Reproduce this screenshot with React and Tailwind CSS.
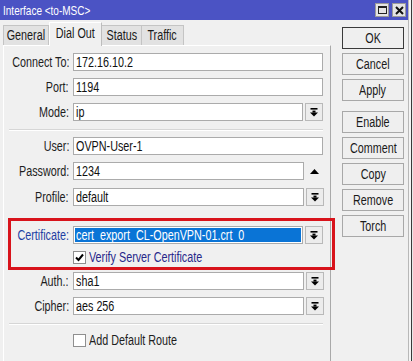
import React from "react";

const FONT = { fontFamily: '"Liberation Sans", Arial, sans-serif' };

function T({ children, o = "origin-left" }) {
  return <span className={`inline-block whitespace-nowrap scale-x-[0.77] ${o}`}>{children}</span>;
}

function DropIcon() {
  return (
    <svg width="8" height="9" viewBox="0 0 8 9">
      <rect x="0.5" y="0" width="7" height="1.6" fill="#000" />
      <rect x="2.5" y="2.6" width="3" height="2" fill="#000" />
      <polygon points="0,4.4 8,4.4 4,8.6" fill="#000" />
    </svg>
  );
}

function DropBtn() {
  return (
    <div className="w-[18px] h-[18px] ml-[2px] border border-[#b9b9b9] bg-[#ececec] flex items-center justify-center">
      <DropIcon />
    </div>
  );
}

function Label({ children, color = "text-[#1e1e1e]" }) {
  return (
    <div className={`w-[65px] pr-[1px] flex justify-end ${color} leading-[18px]`}>
      <T o="origin-right">{children}</T>
    </div>
  );
}

function Field({ label, value, w = "w-[250px]", extra, labelColor, selected }) {
  return (
    <div className="flex items-center h-[18px]">
      <Label color={labelColor}>{label}</Label>
      <div className={`${w} h-[18px] ml-[3px] border border-[#ababab] bg-white flex items-center overflow-hidden ${selected ? "p-[1px]" : ""}`}>
        {selected ? (
          <div className="w-full h-full bg-[#0a74d6] text-white flex items-center pl-[1px] leading-none">
            <T>{value}</T>
          </div>
        ) : (
          <span className="pl-[2px] text-[#111] leading-none">
            <T>{value}</T>
          </span>
        )}
      </div>
      {extra}
    </div>
  );
}

function Check({ checked, label, color }) {
  return (
    <div className="flex items-center h-[18px] pl-[68px]">
      <div className="w-[13px] h-[13px] border border-[#8f8f8f] bg-white flex items-center justify-center">
        {checked && (
          <svg width="9" height="9" viewBox="0 0 9 9">
            <polyline points="1,4.5 3.5,7 8,1.5" fill="none" stroke="#000" strokeWidth="2" />
          </svg>
        )}
      </div>
      <span className={`ml-[3px] ${color} leading-none`}>
        <T>{label}</T>
      </span>
    </div>
  );
}

function Sep() {
  return <div className="ml-[4px] w-[314px] h-[2px] border-t border-[#d6d6d6] border-b border-b-white" />;
}

function Btn({ children, ok }) {
  return (
    <div
      className={`w-[62px] h-[22px] border ${ok ? "border-[#3a3a3a]" : "border-[#a8a8a8]"} bg-[#efefef] flex items-center justify-center text-[#1a1a1a] leading-none`}
    >
      <T o="origin-center">{children}</T>
    </div>
  );
}

function Tab({ children, w, active, first }) {
  if (active) {
    return (
      <div className={`${w} h-[24px] -mb-[1px] bg-[#f0f0f0] border border-white border-r-[#bdbdbd] border-b-0 flex items-center justify-center text-[#1a1a1a] pb-[3px]`}>
        <T o="origin-center">{children}</T>
      </div>
    );
  }
  return (
    <div className={`${w} h-[20px] bg-[#e2e2e2] border border-[#c4c4c4] border-b-0 ${first ? "" : "border-l-0"} flex items-center justify-center text-[#1a1a1a]`}>
      <T o="origin-center">{children}</T>
    </div>
  );
}

export default function App() {
  return (
    <div className="w-[413px] h-[361px] bg-[#f0f0f0] flex overflow-hidden text-[14px]" style={FONT}>
      <div className="w-[409px] h-full flex flex-col border-r border-[#b8b8b8]">
        {/* Title bar */}
        <div className="h-[20px] bg-[#4b53c4] flex items-center justify-between pl-[3px] pr-[2px]">
          <span className="text-white text-[13px] leading-none">
            <T>Interface &lt;to-MSC&gt;</T>
          </span>
          <div className="flex gap-[3px]">
            <div className="w-[14px] h-[14px] bg-[#e4e4e4] border border-[#9a9a9a] flex items-center justify-center">
              <div className="w-[9px] h-[8px] border border-[#222] border-t-2" />
            </div>
            <div className="w-[14px] h-[14px] bg-[#e4e4e4] border border-[#9a9a9a] flex items-center justify-center">
              <svg width="9" height="9" viewBox="0 0 9 9">
                <path d="M1 1 L8 8 M8 1 L1 8" stroke="#111" strokeWidth="2" />
              </svg>
            </div>
          </div>
        </div>

        <div className="flex flex-1">
          {/* Left: tabs + panel */}
          <div className="w-[331px] flex flex-col pl-[3px]">
            <div className="h-[25px] flex items-end relative z-10">
              <Tab w="w-[46px]" first>General</Tab>
              <Tab w="w-[53px]" active>Dial Out</Tab>
              <Tab w="w-[40px]">Status</Tab>
              <Tab w="w-[42px]">Traffic</Tab>
            </div>
            <div className="flex-1 border-t border-l border-white border-r border-r-[#a9a9a9] relative pt-[7px] pl-[1px]">
              <div className="flex flex-col">
                <Field label="Connect To:" value="172.16.10.2" />
                <div className="h-[7px]" />
                <Field label="Port:" value="1194" />
                <div className="h-[7px]" />
                <Field label="Mode:" value="ip" w="w-[230px]" extra={<DropBtn />} />
                <div className="h-[8px]" />
                <Sep />
                <div className="h-[6px]" />
                <Field label="User:" value="OVPN-User-1" />
                <div className="h-[7px]" />
                <Field
                  label="Password:"
                  value="1234"
                  w="w-[231px]"
                  extra={
                    <div className="w-[20px] flex justify-center">
                      <svg width="9" height="5" viewBox="0 0 9 5">
                        <polygon points="0,5 9,5 4.5,0" fill="#000" />
                      </svg>
                    </div>
                  }
                />
                <div className="h-[8px]" />
                <Field label="Profile:" value="default" w="w-[231px]" extra={<DropBtn />} />
                <div className="h-[20px]" />
                <Field
                  label="Certificate:"
                  value="cert_export_CL-OpenVPN-01.crt_0"
                  w="w-[230px]"
                  labelColor="text-[#1f3fa3]"
                  selected
                  extra={<DropBtn />}
                />
                <div className="h-[4px]" />
                <Check checked label="Verify Server Certificate" color="text-[#28288a]" />
                <div className="h-[6px]" />
                <Field label="Auth.:" value="sha1" w="w-[231px]" extra={<DropBtn />} />
                <div className="h-[7px]" />
                <Field label="Cipher:" value="aes 256" w="w-[231px]" extra={<DropBtn />} />
                <div className="h-[8px]" />
                <Sep />
                <div className="h-[6px]" />
                <Check label="Add Default Route" color="text-[#1e1e1e]" />
              </div>
              {/* red annotation box */}
              <div className="absolute left-[4px] top-[172px] w-[327px] h-[52px] border-[3px] border-[#d8131b]" />
            </div>
          </div>

          {/* Right: buttons */}
          <div className="flex flex-col pl-[11px] pt-[7px]">
            <div className="flex flex-col gap-[4px]">
              <Btn ok>OK</Btn>
              <Btn>Cancel</Btn>
              <Btn>Apply</Btn>
            </div>
            <div className="flex flex-col gap-[4px] mt-[10px]">
              <Btn>Enable</Btn>
              <Btn>Comment</Btn>
              <Btn>Copy</Btn>
              <Btn>Remove</Btn>
              <Btn>Torch</Btn>
            </div>
          </div>
        </div>
      </div>
      <div className="w-[4px] h-full flex">
        <div className="w-[2px] bg-[#f4f4f4]" />
        <div className="w-[1px] bg-[#3a3a3a]" />
        <div className="w-[1px] bg-[#e8e8e8]" />
      </div>
    </div>
  );
}
